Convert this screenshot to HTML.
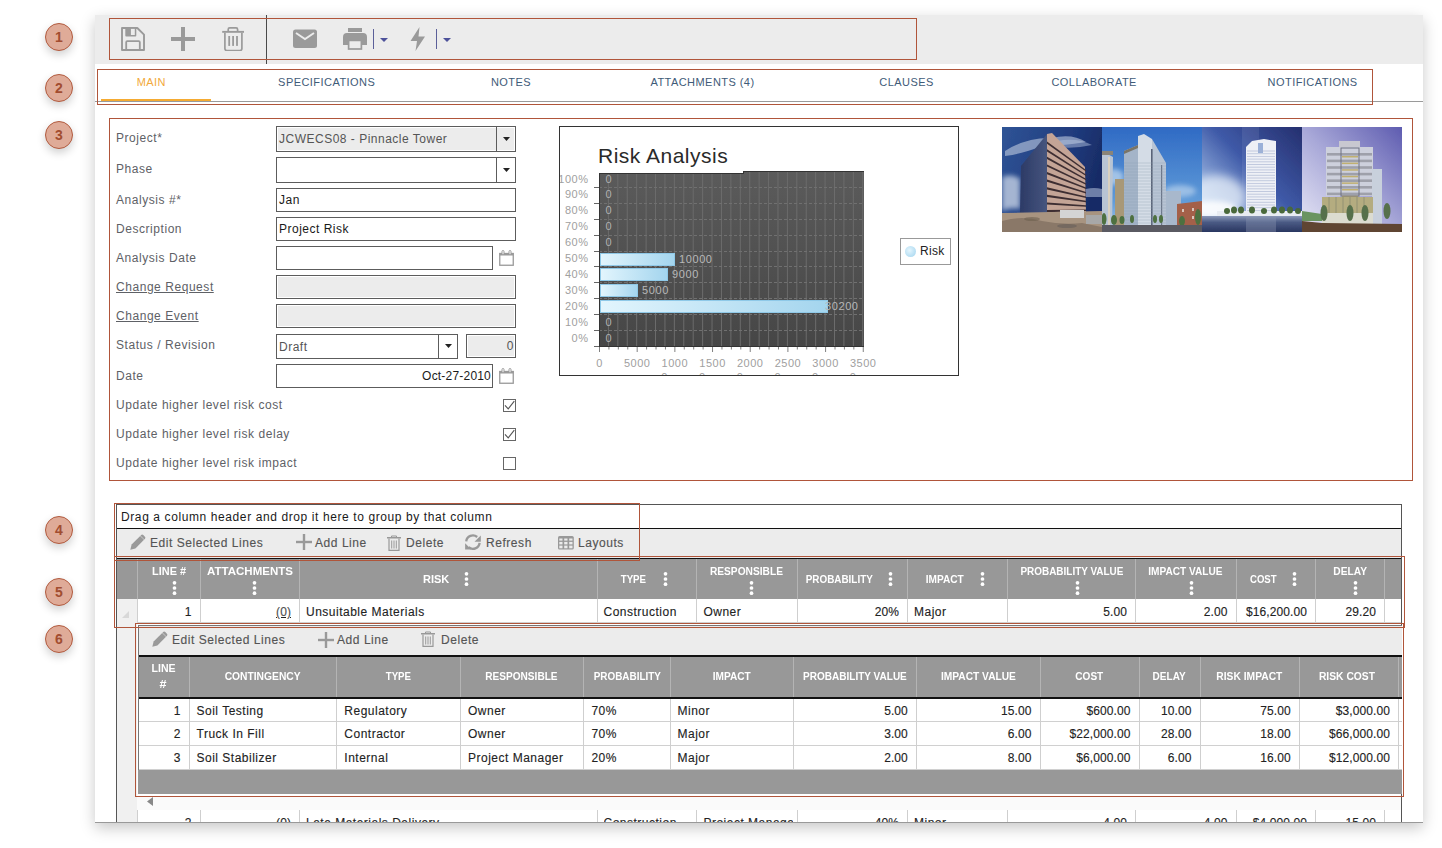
<!DOCTYPE html><html><head><meta charset="utf-8"><style>
html,body{margin:0;padding:0;}
body{width:1442px;height:848px;overflow:hidden;background:#fff;position:relative;font-family:"Liberation Sans", sans-serif;font-size:12px;color:#222;}
.c{position:absolute;left:45px;width:26px;height:26px;border-radius:50%;background:#dfab98;border:1px solid #b25b3f;box-shadow:0 4px 8px rgba(0,0,0,0.18);color:#a24d30;font-weight:bold;font-size:14px;line-height:26px;text-align:center;}
#panel{position:absolute;left:95px;top:15px;width:1328px;height:808px;background:#fff;box-shadow:0 5px 14px rgba(0,0,0,0.22);overflow:hidden;}
#inner{position:absolute;left:-95px;top:-15px;width:1442px;height:848px;}
.lbl{position:absolute;left:116px;color:#5e6166;font-size:12px;letter-spacing:0.55px;white-space:nowrap;height:16px;line-height:16px;}
.inp{position:absolute;box-sizing:border-box;border:1px solid #5c5c5c;background:#fff;box-shadow:inset 0 0 0 1px #fff;}
.dis{background:#ececec;}
.it{position:absolute;font-size:12px;letter-spacing:0.5px;white-space:nowrap;}
.tab{position:absolute;top:74px;height:16px;line-height:16px;font-size:11px;letter-spacing:0.45px;color:#3f5b78;white-space:nowrap;}
.hd{position:absolute;color:#fff;font-weight:bold;font-size:11px;white-space:nowrap;text-align:center;}
.cell{position:absolute;font-size:12px;letter-spacing:0.5px;white-space:nowrap;color:#222;-webkit-text-stroke:0.12px #222;height:24px;line-height:24px;}
.num{letter-spacing:0.1px;}
.tb{position:absolute;font-size:12px;letter-spacing:0.55px;color:#555;-webkit-text-stroke:0.15px #555;white-space:nowrap;height:16px;line-height:16px;}
.vl{position:absolute;width:1px;background:#c8c8c8;}
.cl{position:absolute;color:#a8a8a8;font-size:11px;white-space:nowrap;}

</style></head><body>
<div class="c" style="top:23px">1</div>
<div class="c" style="top:74px">2</div>
<div class="c" style="top:121px">3</div>
<div class="c" style="top:516px">4</div>
<div class="c" style="top:578px">5</div>
<div class="c" style="top:625px">6</div>
<div id="panel"><div id="inner">
<div style="position:absolute;left:95px;top:15px;width:1328px;height:49px;background:#ececec;"></div>
<div style="position:absolute;left:266px;top:15px;width:1px;height:49px;background:#4a4a4a;"></div>
<svg style="position:absolute;left:121px;top:27px" width="24" height="24" viewBox="0 0 24 24">
<path d="M1 1 H16.3 L23 7.7 V23 H1 Z" fill="none" stroke="#9a9a9a" stroke-width="1.9" stroke-linejoin="round"/>
<path d="M4.3 1 H15.3 V8.6 Q15.3 9.5 14.4 9.5 H5.2 Q4.3 9.5 4.3 8.6 Z" fill="#9a9a9a"/>
<rect x="9.9" y="1.9" width="3.9" height="6.1" fill="#ececec"/>
<path d="M5.2 23 V15.3 Q5.2 14.2 6.3 14.2 H17.7 Q18.8 14.2 18.8 15.3 V23" fill="none" stroke="#9a9a9a" stroke-width="1.8"/>
</svg>
<svg style="position:absolute;left:171px;top:27px" width="24" height="24" viewBox="0 0 24 24">
<rect x="10" y="0" width="4" height="24" fill="#9a9a9a"/><rect x="0" y="10" width="24" height="4" fill="#9a9a9a"/></svg>
<svg style="position:absolute;left:222px;top:27px" width="22" height="24" viewBox="0 0 22 24">
<path d="M6.2 4 V2.4 Q6.2 0.9 7.7 0.9 H14.1 Q15.6 0.9 15.6 2.4 V4" fill="none" stroke="#9a9a9a" stroke-width="1.7"/>
<rect x="0.2" y="3.9" width="21.8" height="1.9" fill="#9a9a9a"/>
<path d="M2.9 5.8 V21.4 Q2.9 23.6 5.1 23.6 H17.7 Q19.9 23.6 19.9 21.4 V5.8" fill="none" stroke="#9a9a9a" stroke-width="1.7"/>
<rect x="6.3" y="9" width="1.8" height="9.9" fill="#9a9a9a"/><rect x="10.2" y="9" width="1.8" height="9.9" fill="#9a9a9a"/><rect x="14.1" y="9" width="1.8" height="9.9" fill="#9a9a9a"/>
</svg>
<svg style="position:absolute;left:293px;top:29px" width="24" height="20" viewBox="0 0 24 20">
<rect x="0" y="0.5" width="24" height="18.5" rx="2.5" fill="#9a9a9a"/>
<path d="M3 4 L12 10 L21 4" fill="none" stroke="#ececec" stroke-width="2"/></svg>
<svg style="position:absolute;left:343px;top:28px" width="24" height="22" viewBox="0 0 24 22">
<rect x="5" y="0" width="14" height="4" fill="#9a9a9a"/>
<path d="M0 9 Q0 5 4 5 H20 Q24 5 24 9 V17 H19 V12 H5 V17 H0 Z" fill="#9a9a9a"/>
<rect x="5.6" y="12.4" width="12.8" height="8.6" fill="#ececec" stroke="#9a9a9a" stroke-width="1.7"/></svg>
<div style="position:absolute;left:373px;top:29px;width:1px;height:20px;background:#5b5f99;"></div>
<svg style="position:absolute;left:380px;top:38px" width="8" height="4" viewBox="0 0 8 4"><path d="M0 0 H8 L4 4 Z" fill="#4d519a"/></svg>
<svg style="position:absolute;left:410px;top:27px" width="16" height="24" viewBox="0 0 16 24">
<path d="M9.5 0 L0.5 14 H7 L5.5 24 L15 9.5 H8.5 Z" fill="#9a9a9a"/></svg>
<div style="position:absolute;left:436px;top:29px;width:1px;height:20px;background:#5b5f99;"></div>
<svg style="position:absolute;left:443px;top:38px" width="8" height="4" viewBox="0 0 8 4"><path d="M0 0 H8 L4 4 Z" fill="#4d519a"/></svg>
<div style="position:absolute;left:109px;top:18px;width:808px;height:42px;border:1px solid #b0553a;box-sizing:border-box;z-index:50;"></div>
<div class="tab" style="left:51.30000000000001px;width:200px;text-align:center;color:#f2a93b;">MAIN</div>
<div class="tab" style="left:226.7px;width:200px;text-align:center;">SPECIFICATIONS</div>
<div class="tab" style="left:411px;width:200px;text-align:center;">NOTES</div>
<div class="tab" style="left:602.5px;width:200px;text-align:center;">ATTACHMENTS (4)</div>
<div class="tab" style="left:806.6px;width:200px;text-align:center;">CLAUSES</div>
<div class="tab" style="left:994.2px;width:200px;text-align:center;">COLLABORATE</div>
<div class="tab" style="left:1212.6px;width:200px;text-align:center;">NOTIFICATIONS</div>
<div style="position:absolute;left:95px;top:101px;width:1328px;height:1px;background:#9a9a9a;"></div>
<div style="position:absolute;left:101px;top:99px;width:110px;height:2px;background:#f5ab32;"></div>
<div style="position:absolute;left:97px;top:69px;width:1276px;height:36px;border:1px solid #b0553a;box-sizing:border-box;z-index:50;"></div>
<div style="position:absolute;left:109px;top:118px;width:1304px;height:363px;border:1px solid #b0553a;box-sizing:border-box;z-index:50;"></div>
<div class="lbl" style="top:130px">Project*</div>
<div class="lbl" style="top:161px">Phase</div>
<div class="lbl" style="top:192px">Analysis #*</div>
<div class="lbl" style="top:221px">Description</div>
<div class="lbl" style="top:250px">Analysis Date</div>
<div class="lbl" style="top:279px"><u>Change Request</u></div>
<div class="lbl" style="top:308px"><u>Change Event</u></div>
<div class="lbl" style="top:337px">Status / Revision</div>
<div class="lbl" style="top:368px">Date</div>
<div class="lbl" style="top:397px">Update higher level risk cost</div>
<div class="lbl" style="top:426px">Update higher level risk delay</div>
<div class="lbl" style="top:455px">Update higher level risk impact</div>
<div class="inp dis" style="left:276px;top:126px;width:240px;height:26px"></div>
<div style="position:absolute;left:496px;top:126px;width:1px;height:26px;background:#5c5c5c;"></div>
<svg style="position:absolute;left:502.5px;top:136.5px" width="7" height="4" viewBox="0 0 7 4"><path d="M0 0 H7 L3.5 4 Z" fill="#222"/></svg>
<div class="it" style="left:279px;top:132px;color:#555;">JCWECS08 - Pinnacle Tower</div>
<div class="inp " style="left:276px;top:157px;width:240px;height:26px"></div>
<div style="position:absolute;left:496px;top:157px;width:1px;height:26px;background:#5c5c5c;"></div>
<svg style="position:absolute;left:502.5px;top:167.5px" width="7" height="4" viewBox="0 0 7 4"><path d="M0 0 H7 L3.5 4 Z" fill="#222"/></svg>
<div class="inp " style="left:276px;top:188px;width:240px;height:24px"></div>
<div class="it" style="left:279px;top:193px;color:#1a1a1a;">Jan</div>
<div class="inp " style="left:276px;top:217px;width:240px;height:24px"></div>
<div class="it" style="left:279px;top:222px;color:#1a1a1a;">Project Risk</div>
<div class="inp " style="left:276px;top:246px;width:217px;height:24px"></div>
<svg style="position:absolute;left:499px;top:250px" width="15" height="16" viewBox="0 0 15 16">
<rect x="0.75" y="3.5" width="13.5" height="11.75" fill="none" stroke="#9a9a9a" stroke-width="1.3"/>
<rect x="0.5" y="3" width="14" height="2.5" fill="#9a9a9a"/>
<rect x="3" y="0.5" width="2" height="4" rx="1" fill="#fff" stroke="#9a9a9a" stroke-width="1"/>
<rect x="10" y="0.5" width="2" height="4" rx="1" fill="#fff" stroke="#9a9a9a" stroke-width="1"/></svg>
<div class="inp dis" style="left:276px;top:275px;width:240px;height:24px"></div>
<div class="inp dis" style="left:276px;top:304px;width:240px;height:24px"></div>
<div class="inp " style="left:276px;top:334px;width:182px;height:25px"></div>
<div style="position:absolute;left:438px;top:334px;width:1px;height:25px;background:#5c5c5c;"></div>
<svg style="position:absolute;left:444.5px;top:344.0px" width="7" height="4" viewBox="0 0 7 4"><path d="M0 0 H7 L3.5 4 Z" fill="#222"/></svg>
<div class="it" style="left:279px;top:340px;color:#555;">Draft</div>
<div class="inp dis" style="left:466px;top:334px;width:50px;height:24px"></div>
<div class="it" style="left:466px;width:48px;text-align:right;top:339px;color:#555;">0</div>
<div class="inp " style="left:276px;top:364px;width:217px;height:24px"></div>
<div class="it" style="left:276px;width:215px;text-align:right;top:369px;color:#1a1a1a;letter-spacing:0.2px">Oct-27-2010</div>
<svg style="position:absolute;left:499px;top:368px" width="15" height="16" viewBox="0 0 15 16">
<rect x="0.75" y="3.5" width="13.5" height="11.75" fill="none" stroke="#9a9a9a" stroke-width="1.3"/>
<rect x="0.5" y="3" width="14" height="2.5" fill="#9a9a9a"/>
<rect x="3" y="0.5" width="2" height="4" rx="1" fill="#fff" stroke="#9a9a9a" stroke-width="1"/>
<rect x="10" y="0.5" width="2" height="4" rx="1" fill="#fff" stroke="#9a9a9a" stroke-width="1"/></svg>
<svg style="position:absolute;left:503px;top:399px" width="13" height="13" viewBox="0 0 13 13"><rect x="0.5" y="0.5" width="12" height="12" fill="#fff" stroke="#666" stroke-width="1"/><path d="M2 6.3 L5.2 9.8 L11.3 2.2" fill="none" stroke="#555" stroke-width="1.15"/></svg>
<svg style="position:absolute;left:503px;top:428px" width="13" height="13" viewBox="0 0 13 13"><rect x="0.5" y="0.5" width="12" height="12" fill="#fff" stroke="#666" stroke-width="1"/><path d="M2 6.3 L5.2 9.8 L11.3 2.2" fill="none" stroke="#555" stroke-width="1.15"/></svg>
<svg style="position:absolute;left:503px;top:457px" width="13" height="13" viewBox="0 0 13 13"><rect x="0.5" y="0.5" width="12" height="12" fill="#fff" stroke="#666" stroke-width="1"/></svg>
<div style="position:absolute;left:559px;top:126px;width:400px;height:250px;overflow:hidden;background:#fff;"><div style="position:absolute;left:-559px;top:-126px;width:1442px;height:848px;">
<div style="position:absolute;left:599px;top:171px;width:265px;height:176px;background:linear-gradient(#5b5b5b,#464646);"></div>
<svg style="position:absolute;left:599px;top:171px" width="265" height="176"><line x1="9.42" y1="0" x2="9.42" y2="176" stroke="#6c6c6c" stroke-width="1"/><line x1="18.84" y1="0" x2="18.84" y2="176" stroke="#6c6c6c" stroke-width="1"/><line x1="28.26" y1="0" x2="28.26" y2="176" stroke="#6c6c6c" stroke-width="1"/><line x1="37.68" y1="0" x2="37.68" y2="176" stroke="#6c6c6c" stroke-width="1"/><line x1="47.10" y1="0" x2="47.10" y2="176" stroke="#6c6c6c" stroke-width="1"/><line x1="56.52" y1="0" x2="56.52" y2="176" stroke="#6c6c6c" stroke-width="1"/><line x1="65.94" y1="0" x2="65.94" y2="176" stroke="#6c6c6c" stroke-width="1"/><line x1="75.36" y1="0" x2="75.36" y2="176" stroke="#6c6c6c" stroke-width="1"/><line x1="84.78" y1="0" x2="84.78" y2="176" stroke="#6c6c6c" stroke-width="1"/><line x1="94.20" y1="0" x2="94.20" y2="176" stroke="#6c6c6c" stroke-width="1"/><line x1="103.62" y1="0" x2="103.62" y2="176" stroke="#6c6c6c" stroke-width="1"/><line x1="113.04" y1="0" x2="113.04" y2="176" stroke="#6c6c6c" stroke-width="1"/><line x1="122.46" y1="0" x2="122.46" y2="176" stroke="#6c6c6c" stroke-width="1"/><line x1="131.88" y1="0" x2="131.88" y2="176" stroke="#6c6c6c" stroke-width="1"/><line x1="141.30" y1="0" x2="141.30" y2="176" stroke="#6c6c6c" stroke-width="1"/><line x1="150.72" y1="0" x2="150.72" y2="176" stroke="#6c6c6c" stroke-width="1"/><line x1="160.14" y1="0" x2="160.14" y2="176" stroke="#6c6c6c" stroke-width="1"/><line x1="169.56" y1="0" x2="169.56" y2="176" stroke="#6c6c6c" stroke-width="1"/><line x1="178.98" y1="0" x2="178.98" y2="176" stroke="#6c6c6c" stroke-width="1"/><line x1="188.40" y1="0" x2="188.40" y2="176" stroke="#6c6c6c" stroke-width="1"/><line x1="197.82" y1="0" x2="197.82" y2="176" stroke="#6c6c6c" stroke-width="1"/><line x1="207.24" y1="0" x2="207.24" y2="176" stroke="#6c6c6c" stroke-width="1"/><line x1="216.66" y1="0" x2="216.66" y2="176" stroke="#6c6c6c" stroke-width="1"/><line x1="226.08" y1="0" x2="226.08" y2="176" stroke="#6c6c6c" stroke-width="1"/><line x1="235.50" y1="0" x2="235.50" y2="176" stroke="#6c6c6c" stroke-width="1"/><line x1="244.92" y1="0" x2="244.92" y2="176" stroke="#6c6c6c" stroke-width="1"/><line x1="254.34" y1="0" x2="254.34" y2="176" stroke="#6c6c6c" stroke-width="1"/><line x1="263.76" y1="0" x2="263.76" y2="176" stroke="#6c6c6c" stroke-width="1"/><line x1="0" y1="16.50" x2="265" y2="16.50" stroke="#707070" stroke-width="1" stroke-dasharray="3,2"/><line x1="0" y1="32.50" x2="265" y2="32.50" stroke="#707070" stroke-width="1" stroke-dasharray="3,2"/><line x1="0" y1="48.50" x2="265" y2="48.50" stroke="#707070" stroke-width="1" stroke-dasharray="3,2"/><line x1="0" y1="64.50" x2="265" y2="64.50" stroke="#707070" stroke-width="1" stroke-dasharray="3,2"/><line x1="0" y1="80.50" x2="265" y2="80.50" stroke="#707070" stroke-width="1" stroke-dasharray="3,2"/><line x1="0" y1="95.50" x2="265" y2="95.50" stroke="#707070" stroke-width="1" stroke-dasharray="3,2"/><line x1="0" y1="111.50" x2="265" y2="111.50" stroke="#707070" stroke-width="1" stroke-dasharray="3,2"/><line x1="0" y1="127.50" x2="265" y2="127.50" stroke="#707070" stroke-width="1" stroke-dasharray="3,2"/><line x1="0" y1="143.50" x2="265" y2="143.50" stroke="#707070" stroke-width="1" stroke-dasharray="3,2"/><line x1="0" y1="159.50" x2="265" y2="159.50" stroke="#707070" stroke-width="1" stroke-dasharray="3,2"/></svg>
<div style="position:absolute;left:599px;top:171px;width:265px;height:1px;background:#333;"></div>
<div style="position:absolute;left:599px;top:346px;width:265px;height:1px;background:#333;"></div>
<div style="position:absolute;left:599px;top:171px;width:1px;height:176px;background:#333;"></div>
<div style="position:absolute;left:598px;top:130px;width:145px;height:43.5px;background:#fff;"></div>
<div style="position:absolute;left:599px;top:173px;width:144px;height:1px;background:#333;"></div>
<div style="position:absolute;left:743px;top:171px;width:1px;height:3px;background:#333;"></div>
<div style="position:absolute;left:598px;top:144px;white-space:nowrap;font-size:21px;color:#2a2a2a;letter-spacing:0.5px;line-height:24px;">Risk Analysis</div>
<div style="position:absolute;left:528px;top:171.5px;white-space:nowrap;font-size:11px;color:#a0a0a0;line-height:14px;letter-spacing:0.5px;width:60.5px;text-align:right;">100%</div>
<div style="position:absolute;left:528px;top:187.4px;white-space:nowrap;font-size:11px;color:#a0a0a0;line-height:14px;letter-spacing:0.5px;width:60.5px;text-align:right;">90%</div>
<div style="position:absolute;left:528px;top:203.3px;white-space:nowrap;font-size:11px;color:#a0a0a0;line-height:14px;letter-spacing:0.5px;width:60.5px;text-align:right;">80%</div>
<div style="position:absolute;left:528px;top:219.2px;white-space:nowrap;font-size:11px;color:#a0a0a0;line-height:14px;letter-spacing:0.5px;width:60.5px;text-align:right;">70%</div>
<div style="position:absolute;left:528px;top:235.1px;white-space:nowrap;font-size:11px;color:#a0a0a0;line-height:14px;letter-spacing:0.5px;width:60.5px;text-align:right;">60%</div>
<div style="position:absolute;left:528px;top:251.0px;white-space:nowrap;font-size:11px;color:#a0a0a0;line-height:14px;letter-spacing:0.5px;width:60.5px;text-align:right;">50%</div>
<div style="position:absolute;left:528px;top:266.9px;white-space:nowrap;font-size:11px;color:#a0a0a0;line-height:14px;letter-spacing:0.5px;width:60.5px;text-align:right;">40%</div>
<div style="position:absolute;left:528px;top:282.8px;white-space:nowrap;font-size:11px;color:#a0a0a0;line-height:14px;letter-spacing:0.5px;width:60.5px;text-align:right;">30%</div>
<div style="position:absolute;left:528px;top:298.7px;white-space:nowrap;font-size:11px;color:#a0a0a0;line-height:14px;letter-spacing:0.5px;width:60.5px;text-align:right;">20%</div>
<div style="position:absolute;left:528px;top:314.6px;white-space:nowrap;font-size:11px;color:#a0a0a0;line-height:14px;letter-spacing:0.5px;width:60.5px;text-align:right;">10%</div>
<div style="position:absolute;left:528px;top:330.5px;white-space:nowrap;font-size:11px;color:#a0a0a0;line-height:14px;letter-spacing:0.5px;width:60.5px;text-align:right;">0%</div>
<svg style="position:absolute;left:594px;top:171px" width="6" height="180"><line x1="0" y1="16.50" x2="5" y2="16.50" stroke="#666" stroke-width="1"/><line x1="0" y1="32.50" x2="5" y2="32.50" stroke="#666" stroke-width="1"/><line x1="0" y1="48.50" x2="5" y2="48.50" stroke="#666" stroke-width="1"/><line x1="0" y1="64.50" x2="5" y2="64.50" stroke="#666" stroke-width="1"/><line x1="0" y1="80.50" x2="5" y2="80.50" stroke="#666" stroke-width="1"/><line x1="0" y1="95.50" x2="5" y2="95.50" stroke="#666" stroke-width="1"/><line x1="0" y1="111.50" x2="5" y2="111.50" stroke="#666" stroke-width="1"/><line x1="0" y1="127.50" x2="5" y2="127.50" stroke="#666" stroke-width="1"/><line x1="0" y1="143.50" x2="5" y2="143.50" stroke="#666" stroke-width="1"/><line x1="0" y1="159.50" x2="5" y2="159.50" stroke="#666" stroke-width="1"/><line x1="0" y1="175.50" x2="5" y2="175.50" stroke="#666" stroke-width="1"/></svg>
<div style="position:absolute;left:599.5px;top:253px;width:75.5px;height:13px;background:linear-gradient(90deg,#e2f5fd,#a4d5ee);border:1px solid #8fc9e8;box-sizing:border-box;"></div>
<div style="position:absolute;left:679px;top:252.0px;white-space:nowrap;font-size:11px;color:#b8b8b8;line-height:14px;letter-spacing:0.6px;">10000</div>
<div style="position:absolute;left:599.5px;top:268px;width:68.5px;height:13px;background:linear-gradient(90deg,#e2f5fd,#a4d5ee);border:1px solid #8fc9e8;box-sizing:border-box;"></div>
<div style="position:absolute;left:672px;top:267.0px;white-space:nowrap;font-size:11px;color:#b8b8b8;line-height:14px;letter-spacing:0.6px;">9000</div>
<div style="position:absolute;left:599.5px;top:284px;width:38.5px;height:13px;background:linear-gradient(90deg,#e2f5fd,#a4d5ee);border:1px solid #8fc9e8;box-sizing:border-box;"></div>
<div style="position:absolute;left:642px;top:283.0px;white-space:nowrap;font-size:11px;color:#b8b8b8;line-height:14px;letter-spacing:0.6px;">5000</div>
<div style="position:absolute;left:599.5px;top:300px;width:228.5px;height:13px;background:linear-gradient(90deg,#e2f5fd,#a4d5ee);border:1px solid #8fc9e8;box-sizing:border-box;"></div>
<div style="position:absolute;left:825px;top:299.0px;white-space:nowrap;font-size:11px;color:#b8b8b8;line-height:14px;letter-spacing:0.6px;">30200</div>
<div style="position:absolute;left:605.5px;top:171.5px;white-space:nowrap;font-size:11px;color:#b0b0b0;line-height:14px;">0</div>
<div style="position:absolute;left:605.5px;top:187.4px;white-space:nowrap;font-size:11px;color:#b0b0b0;line-height:14px;">0</div>
<div style="position:absolute;left:605.5px;top:203.3px;white-space:nowrap;font-size:11px;color:#b0b0b0;line-height:14px;">0</div>
<div style="position:absolute;left:605.5px;top:219.2px;white-space:nowrap;font-size:11px;color:#b0b0b0;line-height:14px;">0</div>
<div style="position:absolute;left:605.5px;top:235.1px;white-space:nowrap;font-size:11px;color:#b0b0b0;line-height:14px;">0</div>
<div style="position:absolute;left:605.5px;top:314.6px;white-space:nowrap;font-size:11px;color:#b0b0b0;line-height:14px;">0</div>
<div style="position:absolute;left:605.5px;top:330.5px;white-space:nowrap;font-size:11px;color:#b0b0b0;line-height:14px;">0</div>
<svg style="position:absolute;left:599px;top:347px" width="270" height="6"><line x1="0.50" y1="0" x2="0.50" y2="5" stroke="#808080" stroke-width="1"/><line x1="9.92" y1="0" x2="9.92" y2="2.5" stroke="#808080" stroke-width="1"/><line x1="19.34" y1="0" x2="19.34" y2="2.5" stroke="#808080" stroke-width="1"/><line x1="28.76" y1="0" x2="28.76" y2="2.5" stroke="#808080" stroke-width="1"/><line x1="38.18" y1="0" x2="38.18" y2="5" stroke="#808080" stroke-width="1"/><line x1="47.60" y1="0" x2="47.60" y2="2.5" stroke="#808080" stroke-width="1"/><line x1="57.02" y1="0" x2="57.02" y2="2.5" stroke="#808080" stroke-width="1"/><line x1="66.44" y1="0" x2="66.44" y2="2.5" stroke="#808080" stroke-width="1"/><line x1="75.86" y1="0" x2="75.86" y2="5" stroke="#808080" stroke-width="1"/><line x1="85.28" y1="0" x2="85.28" y2="2.5" stroke="#808080" stroke-width="1"/><line x1="94.70" y1="0" x2="94.70" y2="2.5" stroke="#808080" stroke-width="1"/><line x1="104.12" y1="0" x2="104.12" y2="2.5" stroke="#808080" stroke-width="1"/><line x1="113.54" y1="0" x2="113.54" y2="5" stroke="#808080" stroke-width="1"/><line x1="122.96" y1="0" x2="122.96" y2="2.5" stroke="#808080" stroke-width="1"/><line x1="132.38" y1="0" x2="132.38" y2="2.5" stroke="#808080" stroke-width="1"/><line x1="141.80" y1="0" x2="141.80" y2="2.5" stroke="#808080" stroke-width="1"/><line x1="151.22" y1="0" x2="151.22" y2="5" stroke="#808080" stroke-width="1"/><line x1="160.64" y1="0" x2="160.64" y2="2.5" stroke="#808080" stroke-width="1"/><line x1="170.06" y1="0" x2="170.06" y2="2.5" stroke="#808080" stroke-width="1"/><line x1="179.48" y1="0" x2="179.48" y2="2.5" stroke="#808080" stroke-width="1"/><line x1="188.90" y1="0" x2="188.90" y2="5" stroke="#808080" stroke-width="1"/><line x1="198.32" y1="0" x2="198.32" y2="2.5" stroke="#808080" stroke-width="1"/><line x1="207.74" y1="0" x2="207.74" y2="2.5" stroke="#808080" stroke-width="1"/><line x1="217.16" y1="0" x2="217.16" y2="2.5" stroke="#808080" stroke-width="1"/><line x1="226.58" y1="0" x2="226.58" y2="5" stroke="#808080" stroke-width="1"/><line x1="236.00" y1="0" x2="236.00" y2="2.5" stroke="#808080" stroke-width="1"/><line x1="245.42" y1="0" x2="245.42" y2="2.5" stroke="#808080" stroke-width="1"/><line x1="254.84" y1="0" x2="254.84" y2="2.5" stroke="#808080" stroke-width="1"/><line x1="264.26" y1="0" x2="264.26" y2="5" stroke="#808080" stroke-width="1"/></svg>
<div style="position:absolute;left:574.5px;top:355.5px;white-space:nowrap;font-size:11px;color:#a0a0a0;line-height:14px;letter-spacing:0.5px;width:50px;text-align:center;">0</div>
<div style="position:absolute;left:612.18px;top:355.5px;white-space:nowrap;font-size:11px;color:#a0a0a0;line-height:14px;letter-spacing:0.5px;width:50px;text-align:center;">5000</div>
<div style="position:absolute;left:649.86px;top:355.5px;white-space:nowrap;font-size:11px;color:#a0a0a0;line-height:14px;letter-spacing:0.5px;width:50px;text-align:center;">1000</div>
<div style="position:absolute;left:661.36px;top:370px;white-space:nowrap;font-size:11px;color:#a0a0a0;line-height:14px;">0</div>
<div style="position:absolute;left:687.54px;top:355.5px;white-space:nowrap;font-size:11px;color:#a0a0a0;line-height:14px;letter-spacing:0.5px;width:50px;text-align:center;">1500</div>
<div style="position:absolute;left:699.04px;top:370px;white-space:nowrap;font-size:11px;color:#a0a0a0;line-height:14px;">0</div>
<div style="position:absolute;left:725.22px;top:355.5px;white-space:nowrap;font-size:11px;color:#a0a0a0;line-height:14px;letter-spacing:0.5px;width:50px;text-align:center;">2000</div>
<div style="position:absolute;left:736.72px;top:370px;white-space:nowrap;font-size:11px;color:#a0a0a0;line-height:14px;">0</div>
<div style="position:absolute;left:762.9px;top:355.5px;white-space:nowrap;font-size:11px;color:#a0a0a0;line-height:14px;letter-spacing:0.5px;width:50px;text-align:center;">2500</div>
<div style="position:absolute;left:774.4px;top:370px;white-space:nowrap;font-size:11px;color:#a0a0a0;line-height:14px;">0</div>
<div style="position:absolute;left:800.5799999999999px;top:355.5px;white-space:nowrap;font-size:11px;color:#a0a0a0;line-height:14px;letter-spacing:0.5px;width:50px;text-align:center;">3000</div>
<div style="position:absolute;left:812.0799999999999px;top:370px;white-space:nowrap;font-size:11px;color:#a0a0a0;line-height:14px;">0</div>
<div style="position:absolute;left:838.26px;top:355.5px;white-space:nowrap;font-size:11px;color:#a0a0a0;line-height:14px;letter-spacing:0.5px;width:50px;text-align:center;">3500</div>
<div style="position:absolute;left:849.76px;top:370px;white-space:nowrap;font-size:11px;color:#a0a0a0;line-height:14px;">0</div>
<div style="position:absolute;left:900px;top:238px;width:51px;height:27px;border:1px solid #999;box-sizing:border-box;background:#fff;"></div>
<div style="position:absolute;left:905px;top:245.5px;width:11px;height:11px;border-radius:50%;background:radial-gradient(circle at 40% 40%,#e4f5fd,#9fd3ee);"></div>
<div style="position:absolute;left:920px;top:243px;white-space:nowrap;font-size:12px;color:#222;line-height:16px;letter-spacing:0.3px;">Risk</div>
</div></div>
<div style="position:absolute;left:559px;top:126px;width:400px;height:250px;border:1px solid #333;box-sizing:border-box;z-index:5;"></div>
<svg style="position:absolute;left:1002px;top:127px" width="400" height="105" viewBox="0 0 400 105">
<defs>
<linearGradient id="s1" x1="0" y1="0" x2="1" y2="0.3"><stop offset="0" stop-color="#2f5496"/><stop offset="0.7" stop-color="#1f3a7c"/><stop offset="1" stop-color="#182c66"/></linearGradient>
<linearGradient id="f1" x1="0" y1="0" x2="1" y2="0"><stop offset="0" stop-color="#2c3a66"/><stop offset="1" stop-color="#46557e"/></linearGradient>
<linearGradient id="s2" x1="0" y1="0" x2="0" y2="1"><stop offset="0" stop-color="#2f6ac4"/><stop offset="0.7" stop-color="#5f9ad8"/><stop offset="1" stop-color="#a8c8e8"/></linearGradient>
<linearGradient id="g2" x1="0" y1="0" x2="1" y2="0"><stop offset="0" stop-color="#9aacc4"/><stop offset="0.4" stop-color="#d0d8e4"/><stop offset="1" stop-color="#a8b4c8"/></linearGradient>
<linearGradient id="s3" x1="1" y1="0" x2="0" y2="1"><stop offset="0" stop-color="#252f6e"/><stop offset="0.45" stop-color="#3f5aa8"/><stop offset="0.85" stop-color="#a8c4ea"/><stop offset="1" stop-color="#f0f4fa"/></linearGradient>
<linearGradient id="w3" x1="0" y1="0" x2="0" y2="1"><stop offset="0" stop-color="#8a98b8"/><stop offset="0.4" stop-color="#4a5a84"/><stop offset="1" stop-color="#2a3660"/></linearGradient>
<linearGradient id="s4" x1="0" y1="1" x2="1" y2="0"><stop offset="0" stop-color="#e8e8f6"/><stop offset="0.5" stop-color="#a8a8d8"/><stop offset="1" stop-color="#5e5cb0"/></linearGradient>
<filter id="bl"><feGaussianBlur stdDeviation="0.45"/></filter><filter id="cl" x="-50%" y="-50%" width="200%" height="200%"><feGaussianBlur stdDeviation="5"/></filter><filter id="cl2" x="-50%" y="-50%" width="200%" height="200%"><feGaussianBlur stdDeviation="2.5"/></filter><clipPath id="c1"><rect x="0" y="0" width="100" height="105"/></clipPath><clipPath id="c2"><rect x="100" y="0" width="100" height="105"/></clipPath><clipPath id="c3"><rect x="200" y="0" width="100" height="105"/></clipPath><clipPath id="c4"><rect x="300" y="0" width="100" height="105"/></clipPath>
</defs>
<g filter="url(#bl)">
<g clip-path="url(#c1)">
<rect x="0" y="0" width="100" height="105" fill="url(#s1)"/>
<path d="M3 24 Q25 10 50 11 Q70 6 84 15 Q60 19 40 19 Q20 27 3 29 Z" fill="#c0cce0" opacity="0.6"/><path d="M55 14 Q75 10 90 18 Q72 22 56 20 Z" fill="#b0c0dc" opacity="0.5"/>
<path d="M0 50 Q10 46 18 52 L18 82 Q8 80 0 84 Z" fill="#c4d0e4" opacity="0.8" filter="url(#cl2)"/>
<path d="M84 62 Q92 60 100 62 L100 70 L84 70 Z" fill="#a8b8d4" opacity="0.6"/>
<path d="M19 39 L45 7 L45 88 L18 86 Z" fill="url(#f1)"/>
<path d="M45 7 L50 6 L83 40 L84 86 L45 88 Z" fill="#c4a496"/>
<path d="M45 14.6 L84 43.0 L84 44.5 L45 16.8 Z" fill="#3e2e32"/><path d="M45 22.2 L84 47.4 L84 48.9 L45 24.4 Z" fill="#3e2e32"/><path d="M45 29.8 L84 51.8 L84 53.3 L45 32.0 Z" fill="#3e2e32"/><path d="M45 37.4 L84 56.2 L84 57.7 L45 39.6 Z" fill="#3e2e32"/><path d="M45 45.0 L84 60.6 L84 62.1 L45 47.2 Z" fill="#3e2e32"/><path d="M45 52.6 L84 65.0 L84 66.5 L45 54.8 Z" fill="#3e2e32"/><path d="M45 60.2 L84 69.4 L84 70.9 L45 62.4 Z" fill="#3e2e32"/><path d="M45 67.8 L84 73.8 L84 75.3 L45 70.0 Z" fill="#3e2e32"/><path d="M45 75.4 L84 78.2 L84 79.7 L45 77.6 Z" fill="#3e2e32"/><path d="M45 83.0 L84 82.6 L84 84.1 L45 85.2 Z" fill="#3e2e32"/>
<path d="M0 86 L100 84 L100 105 L0 105 Z" fill="#a89480"/>
<path d="M0 94 Q20 88 40 94 Q60 98 80 96 L100 100 L100 105 L0 105 Z" fill="#8a7868"/><ellipse cx="30" cy="92" rx="8" ry="2" fill="#6e6050" opacity="0.6"/><ellipse cx="65" cy="99" rx="10" ry="2" fill="#5e5a58" opacity="0.5"/>
<rect x="58" y="83" width="24" height="8" fill="#d4d4d4"/>
<rect x="84" y="88" width="16" height="9" fill="#a8a8a8"/>
</g><g clip-path="url(#c2)">
<rect x="100" y="0" width="100" height="105" fill="url(#s2)"/>
<ellipse cx="112" cy="50" rx="10" ry="8" fill="#d8e8f6" opacity="0.6" filter="url(#cl2)"/>
<ellipse cx="178" cy="64" rx="16" ry="6" fill="#c8dcf0" opacity="0.6" filter="url(#cl2)"/>
<path d="M100 24 L111 30 L110 105 L100 105 Z" fill="#b8c4d4"/>
<rect x="100" y="24" width="11" height="4" fill="#8a8478"/>
<rect x="106" y="30" width="2" height="75" fill="#d8d0c0"/>
<rect x="113" y="52" width="9" height="48" fill="#a89878"/>
<path d="M122 24 L136 18 L136 100 L122 100 Z" fill="#a4b4c8"/>
<path d="M122 24 L136 18 L136 21 L122 27 Z" fill="#7a7468"/>
<path d="M136 9 L142 7 L150 12 L150 100 L136 100 Z" fill="#d4dce6"/>
<path d="M150 12 L164 36 L164 100 L150 100 Z" fill="#b8c4d4"/>
<rect x="149" y="22" width="1.6" height="78" fill="#5a6478"/>
<rect x="159" y="38" width="1.2" height="62" fill="#6a7488"/>
<line x1="122" y1="36" x2="164" y2="36" stroke="#8a9ab0" stroke-width="0.6" opacity="0.6"/><line x1="122" y1="39" x2="164" y2="39" stroke="#8a9ab0" stroke-width="0.6" opacity="0.6"/><line x1="122" y1="42" x2="164" y2="42" stroke="#8a9ab0" stroke-width="0.6" opacity="0.6"/><line x1="122" y1="45" x2="164" y2="45" stroke="#8a9ab0" stroke-width="0.6" opacity="0.6"/><line x1="122" y1="48" x2="164" y2="48" stroke="#8a9ab0" stroke-width="0.6" opacity="0.6"/><line x1="122" y1="51" x2="164" y2="51" stroke="#8a9ab0" stroke-width="0.6" opacity="0.6"/><line x1="122" y1="54" x2="164" y2="54" stroke="#8a9ab0" stroke-width="0.6" opacity="0.6"/><line x1="122" y1="57" x2="164" y2="57" stroke="#8a9ab0" stroke-width="0.6" opacity="0.6"/><line x1="122" y1="60" x2="164" y2="60" stroke="#8a9ab0" stroke-width="0.6" opacity="0.6"/><line x1="122" y1="63" x2="164" y2="63" stroke="#8a9ab0" stroke-width="0.6" opacity="0.6"/><line x1="122" y1="66" x2="164" y2="66" stroke="#8a9ab0" stroke-width="0.6" opacity="0.6"/><line x1="122" y1="69" x2="164" y2="69" stroke="#8a9ab0" stroke-width="0.6" opacity="0.6"/><line x1="122" y1="72" x2="164" y2="72" stroke="#8a9ab0" stroke-width="0.6" opacity="0.6"/><line x1="122" y1="75" x2="164" y2="75" stroke="#8a9ab0" stroke-width="0.6" opacity="0.6"/><line x1="122" y1="78" x2="164" y2="78" stroke="#8a9ab0" stroke-width="0.6" opacity="0.6"/><line x1="122" y1="81" x2="164" y2="81" stroke="#8a9ab0" stroke-width="0.6" opacity="0.6"/><line x1="122" y1="84" x2="164" y2="84" stroke="#8a9ab0" stroke-width="0.6" opacity="0.6"/><line x1="122" y1="87" x2="164" y2="87" stroke="#8a9ab0" stroke-width="0.6" opacity="0.6"/><line x1="122" y1="90" x2="164" y2="90" stroke="#8a9ab0" stroke-width="0.6" opacity="0.6"/><line x1="122" y1="93" x2="164" y2="93" stroke="#8a9ab0" stroke-width="0.6" opacity="0.6"/><line x1="122" y1="96" x2="164" y2="96" stroke="#8a9ab0" stroke-width="0.6" opacity="0.6"/><line x1="122" y1="99" x2="164" y2="99" stroke="#8a9ab0" stroke-width="0.6" opacity="0.6"/>
<rect x="164" y="64" width="15" height="36" fill="#a8b8cc"/>
<path d="M175 77 L200 74 L200 105 L175 105 Z" fill="#a4604a"/>
<g fill="#e8e0d8" opacity="0.8"><rect x="180" y="82" width="2" height="3"/><rect x="190" y="81" width="2" height="3"/><rect x="180" y="90" width="2" height="3"/><rect x="190" y="89" width="2" height="3"/></g>
<g fill="#4e7040"><ellipse cx="102" cy="92" rx="2.5" ry="6"/><ellipse cx="112" cy="93" rx="3" ry="5"/><ellipse cx="120" cy="93" rx="2.5" ry="4"/><ellipse cx="130" cy="92" rx="2" ry="4"/><ellipse cx="153" cy="92" rx="2" ry="4"/><ellipse cx="159" cy="92" rx="2" ry="4"/><ellipse cx="180" cy="94" rx="3" ry="5"/><ellipse cx="196" cy="90" rx="3" ry="8"/></g>
<rect x="100" y="98" width="100" height="7" fill="#5a5a62"/>
</g><g clip-path="url(#c3)">
<rect x="200" y="0" width="100" height="105" fill="url(#s3)"/>
<ellipse cx="214" cy="70" rx="30" ry="22" fill="#f0f6fc" opacity="0.7" filter="url(#cl)"/>
<ellipse cx="210" cy="82" rx="24" ry="8" fill="#ffffff" opacity="0.8" filter="url(#cl2)"/>
<rect x="240" y="0" width="17" height="105" fill="#c0c8e8" opacity="0.12"/>
<path d="M244 20 L250 14 L262 12 L274 14 L274 86 L244 86 Z" fill="#eef0f6"/>
<rect x="256" y="16" width="5" height="10" fill="#9ab0d8"/>
<line x1="245" y1="24.0" x2="273" y2="24.0" stroke="#a8b4d0" stroke-width="0.8" opacity="0.8"/><line x1="245" y1="26.7" x2="273" y2="26.7" stroke="#a8b4d0" stroke-width="0.8" opacity="0.8"/><line x1="245" y1="29.4" x2="273" y2="29.4" stroke="#a8b4d0" stroke-width="0.8" opacity="0.8"/><line x1="245" y1="32.1" x2="273" y2="32.1" stroke="#a8b4d0" stroke-width="0.8" opacity="0.8"/><line x1="245" y1="34.8" x2="273" y2="34.8" stroke="#a8b4d0" stroke-width="0.8" opacity="0.8"/><line x1="245" y1="37.5" x2="273" y2="37.5" stroke="#a8b4d0" stroke-width="0.8" opacity="0.8"/><line x1="245" y1="40.2" x2="273" y2="40.2" stroke="#a8b4d0" stroke-width="0.8" opacity="0.8"/><line x1="245" y1="42.9" x2="273" y2="42.9" stroke="#a8b4d0" stroke-width="0.8" opacity="0.8"/><line x1="245" y1="45.6" x2="273" y2="45.6" stroke="#a8b4d0" stroke-width="0.8" opacity="0.8"/><line x1="245" y1="48.3" x2="273" y2="48.3" stroke="#a8b4d0" stroke-width="0.8" opacity="0.8"/><line x1="245" y1="51.0" x2="273" y2="51.0" stroke="#a8b4d0" stroke-width="0.8" opacity="0.8"/><line x1="245" y1="53.7" x2="273" y2="53.7" stroke="#a8b4d0" stroke-width="0.8" opacity="0.8"/><line x1="245" y1="56.4" x2="273" y2="56.4" stroke="#a8b4d0" stroke-width="0.8" opacity="0.8"/><line x1="245" y1="59.1" x2="273" y2="59.1" stroke="#a8b4d0" stroke-width="0.8" opacity="0.8"/><line x1="245" y1="61.8" x2="273" y2="61.8" stroke="#a8b4d0" stroke-width="0.8" opacity="0.8"/><line x1="245" y1="64.5" x2="273" y2="64.5" stroke="#a8b4d0" stroke-width="0.8" opacity="0.8"/><line x1="245" y1="67.2" x2="273" y2="67.2" stroke="#a8b4d0" stroke-width="0.8" opacity="0.8"/><line x1="245" y1="69.9" x2="273" y2="69.9" stroke="#a8b4d0" stroke-width="0.8" opacity="0.8"/><line x1="245" y1="72.6" x2="273" y2="72.6" stroke="#a8b4d0" stroke-width="0.8" opacity="0.8"/><line x1="245" y1="75.3" x2="273" y2="75.3" stroke="#a8b4d0" stroke-width="0.8" opacity="0.8"/><line x1="245" y1="78.0" x2="273" y2="78.0" stroke="#a8b4d0" stroke-width="0.8" opacity="0.8"/><line x1="245" y1="80.7" x2="273" y2="80.7" stroke="#a8b4d0" stroke-width="0.8" opacity="0.8"/><line x1="245" y1="83.4" x2="273" y2="83.4" stroke="#a8b4d0" stroke-width="0.8" opacity="0.8"/><line x1="245" y1="86.1" x2="273" y2="86.1" stroke="#a8b4d0" stroke-width="0.8" opacity="0.8"/>
<rect x="215" y="84" width="85" height="5" fill="#e8ecf2"/>
<g fill="#48683a"><ellipse cx="225" cy="84" rx="3" ry="3"/><ellipse cx="232" cy="83" rx="3" ry="3.5"/><ellipse cx="239" cy="83" rx="3" ry="3.5"/><ellipse cx="250" cy="83" rx="3" ry="3.5"/><ellipse cx="262" cy="84" rx="3" ry="3"/><ellipse cx="272" cy="83" rx="3" ry="3.5"/><ellipse cx="280" cy="83" rx="3" ry="3.5"/><ellipse cx="288" cy="83" rx="3" ry="3.5"/><ellipse cx="296" cy="84" rx="3" ry="3"/></g>
<rect x="200" y="89" width="100" height="16" fill="url(#w3)"/>
<rect x="244" y="89" width="30" height="16" fill="#8a94b0" opacity="0.4"/>
</g><g clip-path="url(#c4)">
<rect x="300" y="0" width="100" height="105" fill="url(#s4)"/>
<rect x="337" y="14" width="21" height="6" fill="#c8c8d0"/>
<rect x="324" y="20" width="47" height="49" fill="#cdd0dc"/>
<rect x="325" y="26.0" width="45" height="2.6" fill="#9ea0aa"/><rect x="340" y="29.0" width="16" height="1.5" fill="#c0b070"/><rect x="325" y="32.6" width="45" height="2.6" fill="#9ea0aa"/><rect x="340" y="35.6" width="16" height="1.5" fill="#c0b070"/><rect x="325" y="39.2" width="45" height="2.6" fill="#9ea0aa"/><rect x="340" y="42.2" width="16" height="1.5" fill="#c0b070"/><rect x="325" y="45.8" width="45" height="2.6" fill="#9ea0aa"/><rect x="340" y="48.8" width="16" height="1.5" fill="#c0b070"/><rect x="325" y="52.4" width="45" height="2.6" fill="#9ea0aa"/><rect x="340" y="55.4" width="16" height="1.5" fill="#c0b070"/><rect x="325" y="59.0" width="45" height="2.6" fill="#9ea0aa"/><rect x="340" y="62.0" width="16" height="1.5" fill="#c0b070"/><rect x="325" y="65.6" width="45" height="2.6" fill="#9ea0aa"/><rect x="340" y="68.6" width="16" height="1.5" fill="#c0b070"/>
<rect x="339" y="21" width="18" height="48" fill="none" stroke="#6e7080" stroke-width="1"/>
<rect x="370" y="42" width="10" height="56" fill="#c8d0dc"/>
<rect x="320" y="70" width="51" height="28" fill="#b4ac80"/>
<g stroke="#8a8a70" stroke-width="0.8"><line x1="327" y1="70" x2="327" y2="98"/><line x1="334" y1="70" x2="334" y2="98"/><line x1="341" y1="70" x2="341" y2="98"/><line x1="348" y1="70" x2="348" y2="98"/><line x1="355" y1="70" x2="355" y2="98"/><line x1="362" y1="70" x2="362" y2="98"/></g>
<rect x="320" y="86" width="51" height="12" fill="#dcdcd0"/>
<path d="M300 84 L320 87 L320 94 L300 94 Z" fill="#6a9460"/>
<g fill="#56704c"><ellipse cx="322" cy="86" rx="3.5" ry="8"/><ellipse cx="348" cy="86" rx="3.5" ry="8"/><ellipse cx="363" cy="86" rx="3.5" ry="8"/><ellipse cx="385" cy="84" rx="3.5" ry="8"/></g>
<path d="M300 94 L320 96 L400 97 L400 105 L300 105 Z" fill="#5e4430"/>
</g></g>
</svg>
<div style="position:absolute;left:116px;top:504px;width:1286px;height:25px;border:1px solid #555;border-bottom:1px solid #111;box-sizing:border-box;background:#fff;"></div>
<div style="position:absolute;left:121px;top:509px;white-space:nowrap;font-size:12px;letter-spacing:0.6px;color:#1a1a1a;line-height:16px;">Drag a column header and drop it here to group by that column</div>
<div style="position:absolute;left:116px;top:529px;width:1286px;height:29px;background:#ececec;border-left:1px solid #555;border-right:1px solid #555;box-sizing:border-box;"></div>
<div style="position:absolute;left:116px;top:558px;width:1286px;height:1px;background:#111;"></div>
<svg style="position:absolute;left:130px;top:534px" width="16" height="16" viewBox="0 0 16 16">
<path d="M0.3 15.7 L1.6 10.6 L10.2 2 L14 5.8 L5.4 14.4 Z" fill="#9a9a9a"/>
<path d="M11.1 1.1 Q12.2 0 13.3 1.1 L14.9 2.7 Q16 3.8 14.9 4.9 L14.3 5.5 L10.5 1.7 Z" fill="#9a9a9a"/></svg>
<div class="tb" style="position:absolute;left:150px;top:535px;white-space:nowrap;">Edit Selected Lines</div>
<svg style="position:absolute;left:296px;top:534px" width="16" height="16" viewBox="0 0 16 16">
<rect x="6.8" y="0" width="2.4" height="16" fill="#999"/><rect x="0" y="6.8" width="16" height="2.4" fill="#999"/></svg>
<div class="tb" style="left:315px;top:535px">Add Line</div>
<svg style="position:absolute;left:387px;top:535px" width="14" height="16" viewBox="0 0 14 16">
<path d="M4.5 2.5 V1 H9.5 V2.5" fill="none" stroke="#999" stroke-width="1"/>
<rect x="0" y="2" width="14" height="1.5" fill="#999"/>
<path d="M2 3.5 V15.3 H12 V3.5" fill="none" stroke="#999" stroke-width="1.2"/>
<rect x="4.2" y="5.5" width="1" height="8" fill="#999"/><rect x="6.5" y="5.5" width="1" height="8" fill="#999"/><rect x="8.8" y="5.5" width="1" height="8" fill="#999"/></svg>
<div class="tb" style="left:406px;top:535px">Delete</div>
<svg style="position:absolute;left:465px;top:533.6px" width="16" height="16" viewBox="0 0 16 16">
<path d="M1.2 7.4 A6.7 6.7 0 0 1 12.2 3.0" fill="none" stroke="#999" stroke-width="2.3"/>
<path d="M15.8 1.4 V7.7 H9.5 Z" fill="#999"/>
<path d="M14.6 8.8 A6.7 6.7 0 0 1 3.6 13.2" fill="none" stroke="#999" stroke-width="2.3"/>
<path d="M0.1 9.3 V15.6 H6.4 Z" fill="#999"/></svg>
<div class="tb" style="left:486px;top:535px">Refresh</div>
<svg style="position:absolute;left:558.2px;top:536.2px" width="16" height="14" viewBox="0 0 16 14">
<rect x="0" y="0" width="15.8" height="13.6" rx="1.6" fill="#999"/>
<g fill="#ececec"><rect x="1.3" y="2.5" width="3.2" height="2.1"/><rect x="6.2" y="2.5" width="3.3" height="2.1"/><rect x="11.2" y="2.5" width="3.3" height="2.1"/>
<rect x="1.3" y="5.9" width="3.2" height="2.5"/><rect x="6.2" y="5.9" width="3.3" height="2.5"/><rect x="11.2" y="5.9" width="3.3" height="2.5"/>
<rect x="1.3" y="9.6" width="3.2" height="2.7"/><rect x="6.2" y="9.6" width="3.3" height="2.7"/><rect x="11.2" y="9.6" width="3.3" height="2.7"/></g></svg>
<div class="tb" style="left:578px;top:535px">Layouts</div>
<div style="position:absolute;left:114px;top:503px;width:526px;height:58px;border:1px solid #b0553a;box-sizing:border-box;z-index:50;"></div>
<div style="position:absolute;left:116px;top:559px;width:1286px;height:40.5px;background:#989898;"></div>
<div style="position:absolute;left:137px;top:559px;width:1px;height:40.5px;background:#b4b4b4;"></div>
<div class="hd" style="left:149.88px;width:38.25px;top:563px;height:16px;line-height:16px;transform:scaleX(0.993);transform-origin:50% 50%;">LINE #</div>
<svg style="position:absolute;left:171.5px;top:580px" width="5" height="16" viewBox="0 0 5 16"><circle cx="2.5" cy="2.8" r="1.85" fill="#fff"/><circle cx="2.5" cy="8" r="1.85" fill="#fff"/><circle cx="2.5" cy="13.2" r="1.85" fill="#fff"/></svg>
<div style="position:absolute;left:199.5px;top:559px;width:1.0px;height:40.5px;background:#b4b4b4;"></div>
<div class="hd" style="left:207.07px;width:86.06px;top:563px;height:16px;line-height:16px;transform:scaleX(1.046);transform-origin:50% 50%;">ATTACHMENTS</div>
<svg style="position:absolute;left:252.2px;top:580px" width="5" height="16" viewBox="0 0 5 16"><circle cx="2.5" cy="2.8" r="1.85" fill="#fff"/><circle cx="2.5" cy="8" r="1.85" fill="#fff"/><circle cx="2.5" cy="13.2" r="1.85" fill="#fff"/></svg>
<div style="position:absolute;left:299px;top:559px;width:1px;height:40.5px;background:#b4b4b4;"></div>
<div class="hd" style="left:420.71px;width:30.28px;top:571px;height:16px;line-height:16px;transform:scaleX(1.001);transform-origin:50% 50%;">RISK</div>
<svg style="position:absolute;left:464.2px;top:571px" width="5" height="16" viewBox="0 0 5 16"><circle cx="2.5" cy="2.8" r="1.85" fill="#fff"/><circle cx="2.5" cy="8" r="1.85" fill="#fff"/><circle cx="2.5" cy="13.2" r="1.85" fill="#fff"/></svg>
<div style="position:absolute;left:596.5px;top:559px;width:1.0px;height:40.5px;background:#b4b4b4;"></div>
<div class="hd" style="left:617.27px;width:32.75px;top:571px;height:16px;line-height:16px;transform:scaleX(0.880);transform-origin:50% 50%;">TYPE</div>
<svg style="position:absolute;left:662.5px;top:571px" width="5" height="16" viewBox="0 0 5 16"><circle cx="2.5" cy="2.8" r="1.85" fill="#fff"/><circle cx="2.5" cy="8" r="1.85" fill="#fff"/><circle cx="2.5" cy="13.2" r="1.85" fill="#fff"/></svg>
<div style="position:absolute;left:696.4px;top:559px;width:1.0px;height:40.5px;background:#b4b4b4;"></div>
<div class="hd" style="left:705.06px;width:82.88px;top:563px;height:16px;line-height:16px;transform:scaleX(0.926);transform-origin:50% 50%;">RESPONSIBLE</div>
<svg style="position:absolute;left:749.1px;top:580px" width="5" height="16" viewBox="0 0 5 16"><circle cx="2.5" cy="2.8" r="1.85" fill="#fff"/><circle cx="2.5" cy="8" r="1.85" fill="#fff"/><circle cx="2.5" cy="13.2" r="1.85" fill="#fff"/></svg>
<div style="position:absolute;left:797px;top:559px;width:1px;height:40.5px;background:#b4b4b4;"></div>
<div class="hd" style="left:800.47px;width:78.56px;top:571px;height:16px;line-height:16px;transform:scaleX(0.899);transform-origin:50% 50%;">PROBABILITY</div>
<svg style="position:absolute;left:888.4px;top:571px" width="5" height="16" viewBox="0 0 5 16"><circle cx="2.5" cy="2.8" r="1.85" fill="#fff"/><circle cx="2.5" cy="8" r="1.85" fill="#fff"/><circle cx="2.5" cy="13.2" r="1.85" fill="#fff"/></svg>
<div style="position:absolute;left:907px;top:559px;width:1px;height:40.5px;background:#b4b4b4;"></div>
<div class="hd" style="left:921.73px;width:45.34px;top:571px;height:16px;line-height:16px;transform:scaleX(0.919);transform-origin:50% 50%;">IMPACT</div>
<svg style="position:absolute;left:979.7px;top:571px" width="5" height="16" viewBox="0 0 5 16"><circle cx="2.5" cy="2.8" r="1.85" fill="#fff"/><circle cx="2.5" cy="8" r="1.85" fill="#fff"/><circle cx="2.5" cy="13.2" r="1.85" fill="#fff"/></svg>
<div style="position:absolute;left:1007px;top:559px;width:1px;height:40.5px;background:#b4b4b4;"></div>
<div class="hd" style="left:1012.80px;width:117.89px;top:563px;height:16px;line-height:16px;transform:scaleX(0.904);transform-origin:50% 50%;">PROBABILITY VALUE</div>
<svg style="position:absolute;left:1074.5px;top:580px" width="5" height="16" viewBox="0 0 5 16"><circle cx="2.5" cy="2.8" r="1.85" fill="#fff"/><circle cx="2.5" cy="8" r="1.85" fill="#fff"/><circle cx="2.5" cy="13.2" r="1.85" fill="#fff"/></svg>
<div style="position:absolute;left:1135px;top:559px;width:1px;height:40.5px;background:#b4b4b4;"></div>
<div class="hd" style="left:1142.91px;width:84.88px;top:563px;height:16px;line-height:16px;transform:scaleX(0.919);transform-origin:50% 50%;">IMPACT VALUE</div>
<svg style="position:absolute;left:1188.5px;top:580px" width="5" height="16" viewBox="0 0 5 16"><circle cx="2.5" cy="2.8" r="1.85" fill="#fff"/><circle cx="2.5" cy="8" r="1.85" fill="#fff"/><circle cx="2.5" cy="13.2" r="1.85" fill="#fff"/></svg>
<div style="position:absolute;left:1235.6px;top:559px;width:1.0px;height:40.5px;background:#b4b4b4;"></div>
<div class="hd" style="left:1245.62px;width:34.56px;top:571px;height:16px;line-height:16px;transform:scaleX(0.870);transform-origin:50% 50%;">COST</div>
<svg style="position:absolute;left:1292.1px;top:571px" width="5" height="16" viewBox="0 0 5 16"><circle cx="2.5" cy="2.8" r="1.85" fill="#fff"/><circle cx="2.5" cy="8" r="1.85" fill="#fff"/><circle cx="2.5" cy="13.2" r="1.85" fill="#fff"/></svg>
<div style="position:absolute;left:1315px;top:559px;width:1px;height:40.5px;background:#b4b4b4;"></div>
<div class="hd" style="left:1329.72px;width:40.27px;top:563px;height:16px;line-height:16px;transform:scaleX(0.929);transform-origin:50% 50%;">DELAY</div>
<svg style="position:absolute;left:1353.2px;top:580px" width="5" height="16" viewBox="0 0 5 16"><circle cx="2.5" cy="2.8" r="1.85" fill="#fff"/><circle cx="2.5" cy="8" r="1.85" fill="#fff"/><circle cx="2.5" cy="13.2" r="1.85" fill="#fff"/></svg>
<div style="position:absolute;left:1384px;top:559px;width:1px;height:40.5px;background:#b4b4b4;"></div>
<div style="position:absolute;left:116px;top:599px;width:1286px;height:24px;background:#fff;"></div>
<div style="position:absolute;left:116px;top:599px;width:21px;height:224px;background:#f0f0f0;"></div>
<svg style="position:absolute;left:122px;top:611px" width="7" height="7" viewBox="0 0 7 7"><path d="M7 0 V7 H0 Z" fill="#d8d8d8"/></svg>
<div style="position:absolute;left:137px;top:599px;width:1px;height:24px;background:#cfcfcf;"></div>
<div style="position:absolute;left:199.5px;top:599px;width:1.0px;height:24px;background:#cfcfcf;"></div>
<div style="position:absolute;left:299px;top:599px;width:1px;height:24px;background:#cfcfcf;"></div>
<div style="position:absolute;left:596.5px;top:599px;width:1.0px;height:24px;background:#cfcfcf;"></div>
<div style="position:absolute;left:696.4px;top:599px;width:1.0px;height:24px;background:#cfcfcf;"></div>
<div style="position:absolute;left:797px;top:599px;width:1px;height:24px;background:#cfcfcf;"></div>
<div style="position:absolute;left:907px;top:599px;width:1px;height:24px;background:#cfcfcf;"></div>
<div style="position:absolute;left:1007px;top:599px;width:1px;height:24px;background:#cfcfcf;"></div>
<div style="position:absolute;left:1135px;top:599px;width:1px;height:24px;background:#cfcfcf;"></div>
<div style="position:absolute;left:1235.6px;top:599px;width:1.0px;height:24px;background:#cfcfcf;"></div>
<div style="position:absolute;left:1315px;top:599px;width:1px;height:24px;background:#cfcfcf;"></div>
<div style="position:absolute;left:1384px;top:599px;width:1px;height:24px;background:#cfcfcf;"></div>
<div style="position:absolute;left:137px;top:622px;width:1265px;height:1px;background:#d0d0d0;"></div>
<div class="cell num" style="left:-8.5px;width:200px;text-align:right;top:600px;">1</div>
<div class="cell num" style="left:91px;width:200px;text-align:right;top:600px;color:#555;"><u>(0)</u></div>
<div class="cell" style="left:306px;top:600px">Unsuitable Materials</div>
<div class="cell" style="left:603.5px;top:600px">Construction</div>
<div class="cell" style="left:703.4px;top:600px">Owner</div>
<div class="cell num" style="left:699px;width:200px;text-align:right;top:600px;">20%</div>
<div class="cell" style="left:914px;top:600px">Major</div>
<div class="cell num" style="left:927px;width:200px;text-align:right;top:600px;">5.00</div>
<div class="cell num" style="left:1027.6px;width:200px;text-align:right;top:600px;">2.00</div>
<div class="cell num" style="left:1107px;width:200px;text-align:right;top:600px;">$16,200.00</div>
<div class="cell num" style="left:1176px;width:200px;text-align:right;top:600px;">29.20</div>
<div style="position:absolute;left:114px;top:556px;width:1291px;height:72px;border:1px solid #b0553a;box-sizing:border-box;z-index:50;"></div>
<div style="position:absolute;left:116px;top:504px;width:1px;height:319px;background:#555;"></div>
<div style="position:absolute;left:1401px;top:505px;width:1px;height:318px;background:#555;"></div>
<div style="position:absolute;left:138px;top:625px;width:1264px;height:169px;background:#fff;"></div>
<div style="position:absolute;left:138px;top:625px;width:1264px;height:30px;background:#ececec;border-top:1px solid #777;border-left:1px solid #777;box-sizing:border-box;"></div>
<svg style="position:absolute;left:152px;top:631px" width="16" height="16" viewBox="0 0 16 16">
<path d="M0.3 15.7 L1.6 10.6 L10.2 2 L14 5.8 L5.4 14.4 Z" fill="#9a9a9a"/>
<path d="M11.1 1.1 Q12.2 0 13.3 1.1 L14.9 2.7 Q16 3.8 14.9 4.9 L14.3 5.5 L10.5 1.7 Z" fill="#9a9a9a"/></svg>
<div class="tb" style="left:172px;top:632px">Edit Selected Lines</div>
<svg style="position:absolute;left:318px;top:631.5px" width="16" height="16" viewBox="0 0 16 16">
<rect x="6.8" y="0" width="2.4" height="16" fill="#999"/><rect x="0" y="6.8" width="16" height="2.4" fill="#999"/></svg>
<div class="tb" style="left:337px;top:632px">Add Line</div>
<svg style="position:absolute;left:421px;top:631px" width="14" height="16" viewBox="0 0 14 16">
<path d="M4.5 2.5 V1 H9.5 V2.5" fill="none" stroke="#999" stroke-width="1"/>
<rect x="0" y="2" width="14" height="1.5" fill="#999"/>
<path d="M2 3.5 V15.3 H12 V3.5" fill="none" stroke="#999" stroke-width="1.2"/>
<rect x="4.2" y="5.5" width="1" height="8" fill="#999"/><rect x="6.5" y="5.5" width="1" height="8" fill="#999"/><rect x="8.8" y="5.5" width="1" height="8" fill="#999"/></svg>
<div class="tb" style="left:441px;top:632px">Delete</div>
<div style="position:absolute;left:138px;top:655px;width:1264px;height:2px;background:#111;"></div>
<div style="position:absolute;left:138px;top:657px;width:1264px;height:40px;background:#989898;"></div>
<div style="position:absolute;left:138px;top:697px;width:1264px;height:2px;background:#111;"></div>
<div class="hd" style="left:148.97px;width:29.06px;top:660px;height:16px;line-height:16px;transform:scaleX(0.958);transform-origin:50% 50%;">LINE</div>
<div class="hd" style="left:158.44px;width:10.12px;top:676px;height:16px;line-height:16px;transform:scaleX(1.143);transform-origin:50% 50%;">#</div>
<div style="position:absolute;left:188.5px;top:657px;width:1.0px;height:40px;background:#b4b4b4;"></div>
<div class="hd" style="left:220.26px;width:85.28px;top:668px;height:16px;line-height:16px;transform:scaleX(0.935);transform-origin:50% 50%;">CONTINGENCY</div>
<div style="position:absolute;left:336.3px;top:657px;width:1.0px;height:40px;background:#b4b4b4;"></div>
<div class="hd" style="left:382.38px;width:32.75px;top:668px;height:16px;line-height:16px;transform:scaleX(0.880);transform-origin:50% 50%;">TYPE</div>
<div style="position:absolute;left:460px;top:657px;width:1px;height:40px;background:#b4b4b4;"></div>
<div class="hd" style="left:480.41px;width:82.88px;top:668px;height:16px;line-height:16px;transform:scaleX(0.917);transform-origin:50% 50%;">RESPONSIBLE</div>
<div style="position:absolute;left:583.4px;top:657px;width:1.0px;height:40px;background:#b4b4b4;"></div>
<div class="hd" style="left:587.52px;width:78.56px;top:668px;height:16px;line-height:16px;transform:scaleX(0.901);transform-origin:50% 50%;">PROBABILITY</div>
<div style="position:absolute;left:669.5px;top:657px;width:1.0px;height:40px;background:#b4b4b4;"></div>
<div class="hd" style="left:708.78px;width:45.34px;top:668px;height:16px;line-height:16px;transform:scaleX(0.919);transform-origin:50% 50%;">IMPACT</div>
<div style="position:absolute;left:792.8px;top:657px;width:1.0px;height:40px;background:#b4b4b4;"></div>
<div class="hd" style="left:795.65px;width:117.89px;top:668px;height:16px;line-height:16px;transform:scaleX(0.911);transform-origin:50% 50%;">PROBABILITY VALUE</div>
<div style="position:absolute;left:915.9px;top:657px;width:1.0px;height:40px;background:#b4b4b4;"></div>
<div class="hd" style="left:935.51px;width:84.88px;top:668px;height:16px;line-height:16px;transform:scaleX(0.927);transform-origin:50% 50%;">IMPACT VALUE</div>
<div style="position:absolute;left:1039.5px;top:657px;width:1.0px;height:40px;background:#b4b4b4;"></div>
<div class="hd" style="left:1071.77px;width:34.56px;top:668px;height:16px;line-height:16px;transform:scaleX(0.916);transform-origin:50% 50%;">COST</div>
<div style="position:absolute;left:1138.6px;top:657px;width:1.0px;height:40px;background:#b4b4b4;"></div>
<div class="hd" style="left:1149.02px;width:40.27px;top:668px;height:16px;line-height:16px;transform:scaleX(0.910);transform-origin:50% 50%;">DELAY</div>
<div style="position:absolute;left:1199.6px;top:657px;width:1.0px;height:40px;background:#b4b4b4;"></div>
<div class="hd" style="left:1211.56px;width:74.69px;top:668px;height:16px;line-height:16px;transform:scaleX(0.934);transform-origin:50% 50%;">RISK IMPACT</div>
<div style="position:absolute;left:1298.8px;top:657px;width:1.0px;height:40px;background:#b4b4b4;"></div>
<div class="hd" style="left:1315.35px;width:63.91px;top:668px;height:16px;line-height:16px;transform:scaleX(0.935);transform-origin:50% 50%;">RISK COST</div>
<div style="position:absolute;left:1398px;top:657px;width:1px;height:40px;background:#b4b4b4;"></div>
<div style="position:absolute;left:138px;top:721px;width:1264px;height:1px;background:#d0d0d0;"></div>
<div style="position:absolute;left:188.5px;top:699px;width:1.0px;height:23px;background:#cfcfcf;"></div>
<div style="position:absolute;left:336.3px;top:699px;width:1.0px;height:23px;background:#cfcfcf;"></div>
<div style="position:absolute;left:460px;top:699px;width:1px;height:23px;background:#cfcfcf;"></div>
<div style="position:absolute;left:583.4px;top:699px;width:1.0px;height:23px;background:#cfcfcf;"></div>
<div style="position:absolute;left:669.5px;top:699px;width:1.0px;height:23px;background:#cfcfcf;"></div>
<div style="position:absolute;left:792.8px;top:699px;width:1.0px;height:23px;background:#cfcfcf;"></div>
<div style="position:absolute;left:915.9px;top:699px;width:1.0px;height:23px;background:#cfcfcf;"></div>
<div style="position:absolute;left:1039.5px;top:699px;width:1.0px;height:23px;background:#cfcfcf;"></div>
<div style="position:absolute;left:1138.6px;top:699px;width:1.0px;height:23px;background:#cfcfcf;"></div>
<div style="position:absolute;left:1199.6px;top:699px;width:1.0px;height:23px;background:#cfcfcf;"></div>
<div style="position:absolute;left:1298.8px;top:699px;width:1.0px;height:23px;background:#cfcfcf;"></div>
<div style="position:absolute;left:1398px;top:699px;width:1px;height:23px;background:#cfcfcf;"></div>
<div class="cell num" style="left:-19.5px;width:200px;text-align:right;top:699px">1</div>
<div class="cell" style="left:196.5px;top:699px">Soil Testing</div>
<div class="cell" style="left:344.3px;top:699px">Regulatory</div>
<div class="cell" style="left:468px;top:699px">Owner</div>
<div class="cell" style="left:591.4px;top:699px">70%</div>
<div class="cell" style="left:677.5px;top:699px">Minor</div>
<div class="cell num" style="left:707.9px;width:200px;text-align:right;top:699px">5.00</div>
<div class="cell num" style="left:831.5px;width:200px;text-align:right;top:699px">15.00</div>
<div class="cell num" style="left:930.5999999999999px;width:200px;text-align:right;top:699px">$600.00</div>
<div class="cell num" style="left:991.5999999999999px;width:200px;text-align:right;top:699px">10.00</div>
<div class="cell num" style="left:1090.8px;width:200px;text-align:right;top:699px">75.00</div>
<div class="cell num" style="left:1190px;width:200px;text-align:right;top:699px">$3,000.00</div>
<div style="position:absolute;left:138px;top:745px;width:1264px;height:1px;background:#d0d0d0;"></div>
<div style="position:absolute;left:188.5px;top:722px;width:1.0px;height:24px;background:#cfcfcf;"></div>
<div style="position:absolute;left:336.3px;top:722px;width:1.0px;height:24px;background:#cfcfcf;"></div>
<div style="position:absolute;left:460px;top:722px;width:1px;height:24px;background:#cfcfcf;"></div>
<div style="position:absolute;left:583.4px;top:722px;width:1.0px;height:24px;background:#cfcfcf;"></div>
<div style="position:absolute;left:669.5px;top:722px;width:1.0px;height:24px;background:#cfcfcf;"></div>
<div style="position:absolute;left:792.8px;top:722px;width:1.0px;height:24px;background:#cfcfcf;"></div>
<div style="position:absolute;left:915.9px;top:722px;width:1.0px;height:24px;background:#cfcfcf;"></div>
<div style="position:absolute;left:1039.5px;top:722px;width:1.0px;height:24px;background:#cfcfcf;"></div>
<div style="position:absolute;left:1138.6px;top:722px;width:1.0px;height:24px;background:#cfcfcf;"></div>
<div style="position:absolute;left:1199.6px;top:722px;width:1.0px;height:24px;background:#cfcfcf;"></div>
<div style="position:absolute;left:1298.8px;top:722px;width:1.0px;height:24px;background:#cfcfcf;"></div>
<div style="position:absolute;left:1398px;top:722px;width:1px;height:24px;background:#cfcfcf;"></div>
<div class="cell num" style="left:-19.5px;width:200px;text-align:right;top:722px">2</div>
<div class="cell" style="left:196.5px;top:722px">Truck In Fill</div>
<div class="cell" style="left:344.3px;top:722px">Contractor</div>
<div class="cell" style="left:468px;top:722px">Owner</div>
<div class="cell" style="left:591.4px;top:722px">70%</div>
<div class="cell" style="left:677.5px;top:722px">Major</div>
<div class="cell num" style="left:707.9px;width:200px;text-align:right;top:722px">3.00</div>
<div class="cell num" style="left:831.5px;width:200px;text-align:right;top:722px">6.00</div>
<div class="cell num" style="left:930.5999999999999px;width:200px;text-align:right;top:722px">$22,000.00</div>
<div class="cell num" style="left:991.5999999999999px;width:200px;text-align:right;top:722px">28.00</div>
<div class="cell num" style="left:1090.8px;width:200px;text-align:right;top:722px">18.00</div>
<div class="cell num" style="left:1190px;width:200px;text-align:right;top:722px">$66,000.00</div>
<div style="position:absolute;left:138px;top:769px;width:1264px;height:1px;background:#d0d0d0;"></div>
<div style="position:absolute;left:188.5px;top:746px;width:1.0px;height:24px;background:#cfcfcf;"></div>
<div style="position:absolute;left:336.3px;top:746px;width:1.0px;height:24px;background:#cfcfcf;"></div>
<div style="position:absolute;left:460px;top:746px;width:1px;height:24px;background:#cfcfcf;"></div>
<div style="position:absolute;left:583.4px;top:746px;width:1.0px;height:24px;background:#cfcfcf;"></div>
<div style="position:absolute;left:669.5px;top:746px;width:1.0px;height:24px;background:#cfcfcf;"></div>
<div style="position:absolute;left:792.8px;top:746px;width:1.0px;height:24px;background:#cfcfcf;"></div>
<div style="position:absolute;left:915.9px;top:746px;width:1.0px;height:24px;background:#cfcfcf;"></div>
<div style="position:absolute;left:1039.5px;top:746px;width:1.0px;height:24px;background:#cfcfcf;"></div>
<div style="position:absolute;left:1138.6px;top:746px;width:1.0px;height:24px;background:#cfcfcf;"></div>
<div style="position:absolute;left:1199.6px;top:746px;width:1.0px;height:24px;background:#cfcfcf;"></div>
<div style="position:absolute;left:1298.8px;top:746px;width:1.0px;height:24px;background:#cfcfcf;"></div>
<div style="position:absolute;left:1398px;top:746px;width:1px;height:24px;background:#cfcfcf;"></div>
<div class="cell num" style="left:-19.5px;width:200px;text-align:right;top:746px">3</div>
<div class="cell" style="left:196.5px;top:746px">Soil Stabilizer</div>
<div class="cell" style="left:344.3px;top:746px">Internal</div>
<div class="cell" style="left:468px;top:746px">Project Manager</div>
<div class="cell" style="left:591.4px;top:746px">20%</div>
<div class="cell" style="left:677.5px;top:746px">Major</div>
<div class="cell num" style="left:707.9px;width:200px;text-align:right;top:746px">2.00</div>
<div class="cell num" style="left:831.5px;width:200px;text-align:right;top:746px">8.00</div>
<div class="cell num" style="left:930.5999999999999px;width:200px;text-align:right;top:746px">$6,000.00</div>
<div class="cell num" style="left:991.5999999999999px;width:200px;text-align:right;top:746px">6.00</div>
<div class="cell num" style="left:1090.8px;width:200px;text-align:right;top:746px">16.00</div>
<div class="cell num" style="left:1190px;width:200px;text-align:right;top:746px">$12,000.00</div>
<div style="position:absolute;left:138px;top:625px;width:1px;height:169px;background:#777;"></div>
<div style="position:absolute;left:138px;top:770px;width:1264px;height:24px;background:#989898;"></div>
<div style="position:absolute;left:135px;top:623px;width:1269px;height:174px;border:1px solid #b0553a;box-sizing:border-box;z-index:50;"></div>
<div style="position:absolute;left:137px;top:797px;width:1264px;height:13px;background:#fafafa;"></div>
<svg style="position:absolute;left:147px;top:797px" width="6" height="9" viewBox="0 0 6 9"><path d="M6 0 V9 L0 4.5 Z" fill="#888"/></svg>
<div style="position:absolute;left:137px;top:810px;width:1px;height:13px;background:#cfcfcf;"></div>
<div style="position:absolute;left:199.5px;top:810px;width:1.0px;height:13px;background:#cfcfcf;"></div>
<div style="position:absolute;left:299px;top:810px;width:1px;height:13px;background:#cfcfcf;"></div>
<div style="position:absolute;left:596.5px;top:810px;width:1.0px;height:13px;background:#cfcfcf;"></div>
<div style="position:absolute;left:696.4px;top:810px;width:1.0px;height:13px;background:#cfcfcf;"></div>
<div style="position:absolute;left:797px;top:810px;width:1px;height:13px;background:#cfcfcf;"></div>
<div style="position:absolute;left:907px;top:810px;width:1px;height:13px;background:#cfcfcf;"></div>
<div style="position:absolute;left:1007px;top:810px;width:1px;height:13px;background:#cfcfcf;"></div>
<div style="position:absolute;left:1135px;top:810px;width:1px;height:13px;background:#cfcfcf;"></div>
<div style="position:absolute;left:1235.6px;top:810px;width:1.0px;height:13px;background:#cfcfcf;"></div>
<div style="position:absolute;left:1315px;top:810px;width:1px;height:13px;background:#cfcfcf;"></div>
<div style="position:absolute;left:1384px;top:810px;width:1px;height:13px;background:#cfcfcf;"></div>
<div style="position:absolute;left:0;top:0;width:1442px;height:822px;overflow:hidden">
<div class="cell num" style="left:-8.5px;width:200px;text-align:right;top:811px">2</div>
<div class="cell num" style="left:91px;width:200px;text-align:right;top:811px"><u>(0)</u></div>
<div class="cell" style="left:306px;top:811px;max-width:400px;overflow:hidden">Late Materials Delivery</div>
<div class="cell" style="left:603.5px;top:811px;max-width:400px;overflow:hidden">Construction</div>
<div class="cell" style="left:703.4px;top:811px;max-width:90px;overflow:hidden">Project Manager</div>
<div class="cell num" style="left:699px;width:200px;text-align:right;top:811px">40%</div>
<div class="cell" style="left:914px;top:811px;max-width:400px;overflow:hidden">Minor</div>
<div class="cell num" style="left:927px;width:200px;text-align:right;top:811px">4.00</div>
<div class="cell num" style="left:1027.6px;width:200px;text-align:right;top:811px">4.00</div>
<div class="cell num" style="left:1107px;width:200px;text-align:right;top:811px">$4,000.00</div>
<div class="cell num" style="left:1176px;width:200px;text-align:right;top:811px">15.00</div>
</div>
<div style="position:absolute;left:95px;top:822px;width:1328px;height:1px;background:#999;"></div>
</div></div>
</body></html>
